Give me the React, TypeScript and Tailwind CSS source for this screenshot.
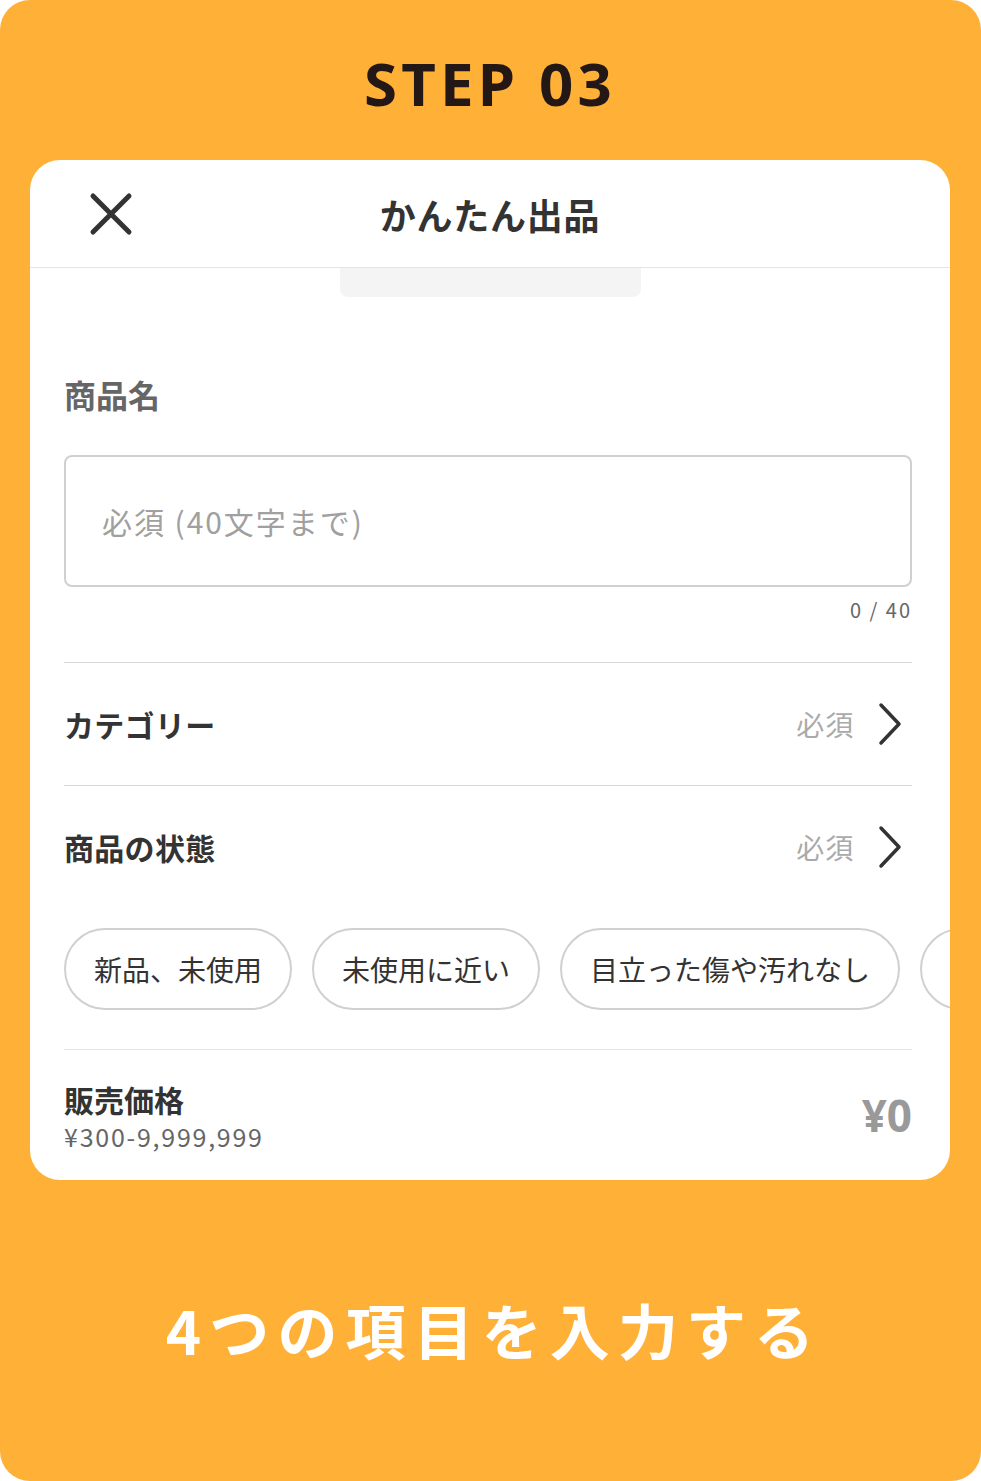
import React from "react";

const jp = { fontFamily: '"Noto Sans CJK JP", "Noto Sans", sans-serif' };

// シェブロン（右向き）
function Chevron() {
    return (
        <svg width="26" height="44" viewBox="0 0 26 44" fill="none" className="shrink-0">
            <polyline points="3,3 21,22 3,41" stroke="#333333" strokeWidth="3.5" strokeLinecap="round" strokeLinejoin="round" />
        </svg>
    );
}

function SelectRow({ label }: { label: string }) {
    return (
        <div className="flex items-center justify-between h-[122px]">
            <span className="text-[30px] font-bold text-[#333333] tracking-[0.01em]">{label}</span>
            <div className="flex items-center gap-[24px] pr-[8px]">
                <span className="text-[28px] text-[#aaaaaa] tracking-[0.03em]">必須</span>
                <Chevron />
            </div>
        </div>
    );
}

const conditions = ["新品、未使用", "未使用に近い", "目立った傷や汚れなし", "やや傷や汚れあり"];

export default function App() {
    return (
        <div className="w-[981px] h-[1481px] bg-white" style={jp}>
            <div className="w-full h-full bg-[#ffb037] rounded-[30px] flex flex-col pl-[30px] pr-[31px]">
                <div className="h-[160px] flex items-center justify-center pt-[6px]">
                    <h2
                        className="text-[60px] font-bold tracking-[0.07em] text-[#231815] leading-none"
                        style={{ fontFamily: '"Noto Sans", sans-serif' }}
                    >
                        STEP 03
                    </h2>
                </div>

                <section className="bg-white rounded-[30px] h-[1020px] overflow-hidden flex flex-col">
                    <header className="h-[108px] border-b border-[#e5e5e5] flex items-center relative shrink-0">
                        <svg width="44" height="44" viewBox="0 0 44 44" className="ml-[59px]">
                            <path d="M4 4 L40 40 M40 4 L4 40" stroke="#333333" strokeWidth="5" strokeLinecap="round" />
                        </svg>
                        <h1 className="absolute left-0 right-0 text-center text-[36px] font-bold text-[#333333] tracking-[0.02em] pointer-events-none">
                            かんたん出品
                        </h1>
                    </header>
                    <div className="w-[301px] h-[29px] mx-auto bg-[#f4f4f4] rounded-b-[8px] shrink-0" />

                    <div className="pl-[34px] pr-[38px] flex flex-col">
                        <label className="mt-[73px] text-[32px] leading-[48px] font-bold text-[#666666]">商品名</label>
                        <div className="mt-[37px] h-[132px] border-2 border-[#d0d0d0] rounded-[8px] flex items-center px-[36px]">
                            <span className="text-[30px] text-[#a0a0a0] tracking-[0.065em]">必須 (40文字まで)</span>
                        </div>
                        <div className="mt-[9px] text-right text-[20px] leading-[28px] text-[#666666] tracking-[0.1em]">0 / 40</div>

                        <div className="mt-[38px] border-t border-[#d6d6d6]" />
                        <SelectRow label="カテゴリー" />
                        <div className="border-t border-[#d6d6d6]" />
                        <SelectRow label="商品の状態" />

                        <div className="flex gap-[20px] mt-[20px]">
                            {conditions.map((c) => (
                                <div
                                    key={c}
                                    className="h-[82px] shrink-0 border-2 border-[#d0d0d0] rounded-full flex items-center px-[28px] text-[28px] text-[#333333]"
                                >
                                    {c}
                                </div>
                            ))}
                        </div>

                        <div className="mt-[39px] border-t border-[#e6e6e6]" />
                        <div className="flex items-center justify-between pt-[28px]">
                            <div className="flex flex-col">
                                <span className="text-[30px] leading-[42px] font-bold text-[#333333]">販売価格</span>
                                <span className="text-[25px] leading-[32px] text-[#666666] tracking-[0.07em]">¥300-9,999,999</span>
                            </div>
                            <span className="text-[44px] font-bold text-[#999999]" style={{ fontFamily: '"Noto Sans", sans-serif' }}>
                                ¥0
                            </span>
                        </div>
                    </div>
                </section>

                <div className="flex-1 flex items-center justify-center pb-[4px] pl-[8px]">
                    <p className="text-[60px] font-bold text-white tracking-[0.135em]">4つの項目を入力する</p>
                </div>
            </div>
        </div>
    );
}
